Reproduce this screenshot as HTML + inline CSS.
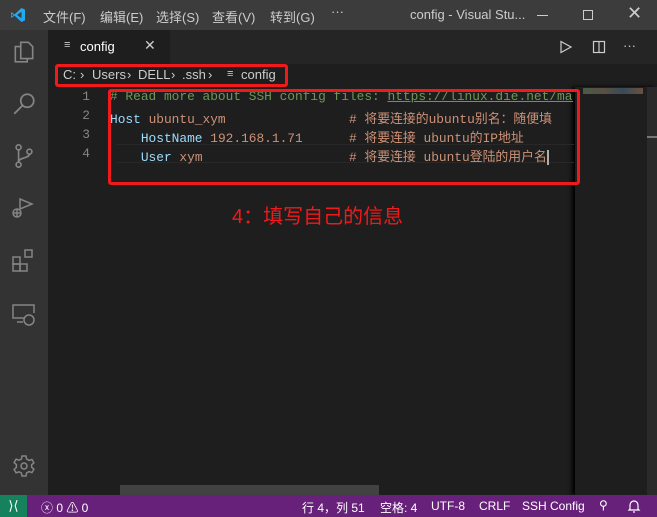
<!DOCTYPE html>
<html><head><meta charset="utf-8"><style>
*{margin:0;padding:0;box-sizing:border-box}
body{width:657px;height:517px;overflow:hidden;background:#1e1e1e;font-family:"Liberation Sans","Noto Sans CJK SC",sans-serif;position:relative;color:#ccc}
.abs{position:absolute}
.title{left:0;top:0;width:657px;height:30px;background:#3c3c3c;font-size:13px;color:#ccc}
.act{left:0;top:30px;width:48px;height:465px;background:#333}
.tabs{left:48px;top:30px;width:609px;height:34px;background:#252526}
.tab{left:48px;top:30px;width:122px;height:34px;background:#1e1e1e;color:#fff;font-size:13px}
.mono{font-family:"Liberation Mono","Noto Sans CJK SC",monospace;font-size:12.85px;white-space:pre}
.ln{color:#858585;text-align:right;width:30px;left:60px}
.status{left:0;top:495px;width:657px;height:22px;background:#68217a;color:#fff;font-size:12px}
.red{border:3px solid #f01a1a;border-radius:3px}
.bc{position:absolute;top:67px;font-size:13px;color:#ccc;white-space:pre}
</style></head><body>
<div class="abs title">
 <svg class="abs" style="left:10px;top:7px" width="16" height="16" viewBox="0 0 16 16"><path d="M11.5 1 L15 2.6 V13.4 L11.5 15 L4.5 8.6 L1.8 10.7 L1 10.2 V5.8 L1.8 5.3 L4.5 7.4 Z M11.5 4.8 L7 8 L11.5 11.2 Z M1.8 6.5 V9.5 L3.6 8 Z" fill="#23a9f2"/></svg>
 <span class="abs" style="left:43px;top:7px">文件(F)</span>
 <span class="abs" style="left:100px;top:7px">编辑(E)</span>
 <span class="abs" style="left:156px;top:7px">选择(S)</span>
 <span class="abs" style="left:212px;top:7px">查看(V)</span>
 <span class="abs" style="left:270px;top:7px">转到(G)</span>
 <span class="abs" style="left:331px;top:4px">···</span>
 <span class="abs" style="left:410px;top:7px">config - Visual Stu...</span>
 <div class="abs" style="left:537px;top:15px;width:11px;height:1px;background:#ccc"></div>
 <div class="abs" style="left:583px;top:10px;width:10px;height:10px;border:1px solid #ccc"></div>
 <span class="abs" style="left:627px;top:3px;font-size:18px">✕</span>
</div>
<div class="abs act">
 <svg class="abs" style="left:11px;top:9px" width="26" height="26" viewBox="0 0 24 24" fill="none" stroke="#858585" stroke-width="1.5"><path d="M9 3h7l4 4v11H9z"/><path d="M9 7H4v14h11v-3"/></svg>
 <svg class="abs" style="left:11px;top:61px" width="26" height="26" viewBox="0 0 24 24" fill="none" stroke="#858585" stroke-width="1.6"><circle cx="15" cy="9" r="6"/><path d="M10.5 13.5L3 21"/></svg>
 <svg class="abs" style="left:11px;top:113px" width="26" height="26" viewBox="0 0 24 24" fill="none" stroke="#858585" stroke-width="1.5"><circle cx="7" cy="4" r="2.3"/><circle cx="7" cy="20" r="2.3"/><circle cx="17" cy="8" r="2.3"/><path d="M7 6.3v11.4M17 10.3c0 4-10 3-10 7"/></svg>
 <svg class="abs" style="left:10px;top:166px" width="26" height="26" viewBox="0 0 26 26" fill="none" stroke="#858585" stroke-width="1.5"><path d="M10 3v10l12-5z"/><circle cx="7" cy="17" r="4"/><path d="M3 17h8M7 13v8"/></svg>
 <svg class="abs" style="left:11px;top:218px" width="26" height="26" viewBox="0 0 26 26" fill="none" stroke="#858585" stroke-width="1.5"><rect x="2" y="9" width="7" height="7"/><rect x="2" y="16" width="7" height="7"/><rect x="9" y="16" width="7" height="7"/><rect x="14" y="2" width="7" height="7"/></svg>
 <svg class="abs" style="left:11px;top:272px" width="26" height="26" viewBox="0 0 26 26" fill="none" stroke="#858585" stroke-width="1.5"><path d="M13 16H2V3h21v8"/><path d="M6 20h6"/><circle cx="18" cy="18" r="5"/></svg>
 <svg class="abs" style="left:12px;top:424px" width="24" height="24" viewBox="0 0 24 24" fill="none" stroke="#858585" stroke-width="1.5"><circle cx="12" cy="12" r="3"/><path d="M10 2h4l.6 3 2.4 1.4 2.9-1 2 3.4-2.3 2v2.4l2.3 2-2 3.4-2.9-1-2.4 1.4-.6 3h-4l-.6-3L7 17.8l-2.9 1-2-3.4 2.3-2v-2.8l-2.3-2 2-3.4 2.9 1L9.4 5z"/></svg>
</div>
<div class="abs tabs"></div>
<div class="abs tab">
 <span class="abs" style="left:16px;top:9px;font-size:11px;color:#ccc">≡</span>
 <span class="abs" style="left:32px;top:9px">config</span>
 <span class="abs" style="left:96px;top:7px;font-size:14px;color:#ccc">✕</span>
</div>
<svg class="abs" style="left:559px;top:40px" width="14" height="14" viewBox="0 0 14 14" fill="none" stroke="#ccc" stroke-width="1.2"><path d="M2 1.5v11l10-5.5z"/></svg>
<svg class="abs" style="left:592px;top:40px" width="14" height="14" viewBox="0 0 14 14" fill="none" stroke="#ccc" stroke-width="1.2"><rect x="1.5" y="1.5" width="11" height="11"/><path d="M7 1.5v11"/></svg>
<span class="abs" style="left:623px;top:38px;color:#ccc;font-size:13px">···</span>
<span class="bc" style="left:63px">C:</span><span class="bc" style="left:80px">›</span>
<span class="bc" style="left:92px">Users</span><span class="bc" style="left:127px">›</span>
<span class="bc" style="left:138px">DELL</span><span class="bc" style="left:171px">›</span>
<span class="bc" style="left:182px">.ssh</span><span class="bc" style="left:208px">›</span>
<span class="bc" style="left:227px;font-size:11px;top:68px">≡</span>
<span class="bc" style="left:241px">config</span>
<div class="abs red" style="left:55px;top:64px;width:233px;height:23px"></div>
<div class="abs" style="left:575px;top:87px;width:82px;height:408px;background:#1e1e1e;box-shadow:-3px 0 4px #000"></div>
<div class="abs" style="left:583px;top:88px;width:60px;height:6px;background:linear-gradient(90deg,#4a5a4a,#5a5040,#3a4a5a,#6a5040)"></div>
<div class="abs" style="left:647px;top:87px;width:10px;height:408px;background:#2a2a2a"></div>
<div class="abs" style="left:647px;top:136px;width:10px;height:2px;background:#777"></div>
<div class="abs" style="left:116px;top:144px;width:458px;height:19px;border-top:1px solid #282828;border-bottom:1px solid #282828"></div>
<div class="abs mono ln" style="top:89px">1</div>
<div class="abs mono ln" style="top:108px">2</div>
<div class="abs mono ln" style="top:127px">3</div>
<div class="abs mono ln" style="top:146px">4</div>
<div class="abs mono" style="left:110px;top:89px;color:#6a9955;width:463px;overflow:hidden"># Read more about SSH config files: <span style="text-decoration:underline">https://linux.die.net/man</span></div>
<div class="abs mono" style="left:110px;top:108px"><span style="color:#9cdcfe">Host</span> <span style="color:#ce9178">ubuntu_xym</span>                <span style="color:#ce9178"># 将要连接的ubuntu别名：随便填</span></div>
<div class="abs mono" style="left:110px;top:127px">    <span style="color:#9cdcfe">HostName</span> <span style="color:#ce9178">192.168.1.71</span>      <span style="color:#ce9178"># 将要连接 ubuntu的IP地址</span></div>
<div class="abs mono" style="left:110px;top:146px">    <span style="color:#9cdcfe">User</span> <span style="color:#ce9178">xym</span>                   <span style="color:#ce9178"># 将要连接 ubuntu登陆的用户名</span><span style="border-left:2px solid #aeafad"></span></div>
<div class="abs red" style="left:108px;top:89px;width:472px;height:96px"></div>
<div class="abs" style="left:232px;top:200px;font-size:20px;color:#f01a1a">4：填写自己的信息</div>
<div class="abs" style="left:120px;top:485px;width:259px;height:10px;background:#424242"></div>
<div class="abs status">
 <div class="abs" style="left:0;top:0;width:27px;height:22px;background:#16825d;font-size:13px;text-align:center;line-height:22px">⟩⟨</div>
 <span class="abs" style="left:41px;top:4px">ⓧ 0 ⚠ 0</span>
 <span class="abs" style="left:302px;top:4px">行 4，列 51</span>
 <span class="abs" style="left:380px;top:4px">空格: 4</span>
 <span class="abs" style="left:431px;top:4px">UTF-8</span>
 <span class="abs" style="left:479px;top:4px">CRLF</span>
 <span class="abs" style="left:522px;top:4px">SSH Config</span>
 <span class="abs" style="left:599px;top:3px">⚲</span>
 <svg class="abs" style="left:627px;top:4px" width="14" height="14" viewBox="0 0 14 14" fill="none" stroke="#fff" stroke-width="1.2"><path d="M3 10V6a4 4 0 0 1 8 0v4l1 1H2z"/><path d="M6 13h2"/></svg>
</div>
</body></html>
